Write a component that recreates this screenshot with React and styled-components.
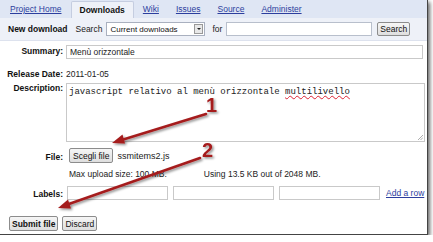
import React from 'react';
import styled, { createGlobalStyle } from 'styled-components';

const GlobalStyle = createGlobalStyle`
  html, body {
    margin: 0;
    padding: 0;
    background: #ffffff;
  }
  body {
    font-family: "Liberation Sans", Arial, sans-serif;
    font-size: 8.5px;
    color: #111;
  }
`;

const tabs = ['Project Home', 'Downloads', 'Wiki', 'Issues', 'Source', 'Administer'];

export default function App() {
  return (
    <>
      <GlobalStyle />
      <Frame>
        <TabBar>
          {tabs.map(t => (
            <Tab key={t} $active={t === 'Downloads'}>
              {t}
            </Tab>
          ))}
        </TabBar>
        <SearchBar>
          <BarTitle>New download</BarTitle>
          <BarText>Search</BarText>
          <Select>
            <span>Current downloads</span>
            <SelectArrow />
          </Select>
          <BarText>for</BarText>
          <BarInput />
          <Button>Search</Button>
        </SearchBar>

        <Form>
          <Label $top={5}>Summary:</Label>
          <Input $top={4} $width={352}>Menù orizzontale</Input>

          <Label $top={10}>Release Date:</Label>
          <Value $top={10}>2011-01-05</Value>

          <Label $top={4}>Description:</Label>
          <TextArea $top={4}>
            javascript relativo al menù orizzontale <Misspelled>multilivello</Misspelled>
            <Grip viewBox="0 0 6 6">
              <path d="M1 6 L6 1 M3.5 6 L6 3.5" stroke="#999" strokeWidth="0.8" />
            </Grip>
          </TextArea>

          <Label $top={10}>File:</Label>
          <FileRow $top={6}>
            <Button $pad={3} $height={13}>Scegli file</Button>
            <FileName>ssmitems2.js</FileName>
          </FileRow>

          <span />
          <UploadInfo $top={6}>
            <span>Max upload size: 100 MB.</span>
            <span>Using 13.5 KB out of 2048 MB.</span>
          </UploadInfo>

          <Label $top={10}>Labels:</Label>
          <LabelRow $top={7}>
            <Input $width={96} />
            <Input $width={96} />
            <Input $width={96} />
            <Link>Add a row</Link>
          </LabelRow>
        </Form>

        <Actions>
          <Button $bold $height={13}>Submit file</Button>
          <Button $height={13}>Discard</Button>
        </Actions>

        <Overlay viewBox="0 0 427 234">
          <defs>
            <filter id="sh" x="-20%" y="-20%" width="140%" height="140%">
              <feDropShadow dx="1.5" dy="1.5" stdDeviation="1" floodColor="#000" floodOpacity="0.45" />
            </filter>
          </defs>
          <g filter="url(#sh)" fill="#a51c1e" stroke="#a51c1e">
            <line x1="206" y1="114" x2="120" y2="140.5" strokeWidth="2.6" strokeLinecap="round" />
            <polygon points="112,143 122.5,134.5 125,143.5" stroke="none" />
            <line x1="200" y1="158" x2="66" y2="205" strokeWidth="2.6" strokeLinecap="round" />
            <polygon points="58,208 68,199.5 71,208.5" stroke="none" />
            <Digit x="206" y="112">1</Digit>
            <Digit x="202" y="157">2</Digit>
          </g>
        </Overlay>
      </Frame>
    </>
  );
}

const Frame = styled.div`
  position: relative;
  width: 427px;
  height: 234px;
  background: #fff;
  border-right: 1px solid #444;
  border-bottom: 1px solid #444;
  box-shadow: 2px 2px 4px rgba(0, 0, 0, 0.6);
`;

const TabBar = styled.div`
  display: flex;
  align-items: flex-end;
  height: 18px;
  padding-left: 2px;
  gap: 1px;
  background: #dfe6f4;
`;

const Tab = styled.div`
  display: flex;
  align-items: center;
  height: ${p => (p.$active ? '16px' : '18px')};
  padding: 0 8px;
  font-size: 8.5px;
  color: ${p => (p.$active ? '#111' : '#2c3e9e')};
  font-weight: ${p => (p.$active ? 700 : 400)};
  text-decoration: ${p => (p.$active ? 'none' : 'underline')};
  background: ${p => (p.$active ? '#eef1f8' : 'transparent')};
  border: ${p => (p.$active ? '1px solid #c5cde0' : 'none')};
  border-bottom: none;
  border-radius: 2px 2px 0 0;
`;

const SearchBar = styled.div`
  display: flex;
  align-items: center;
  height: 22px;
  padding-left: 8px;
  background: #eef1f8;
  border-bottom: 1px solid #dde2ee;
`;

const BarTitle = styled.span`
  font-weight: 700;
  margin-right: 8px;
`;

const BarText = styled.span`
  margin-right: 4px;
  color: #222;
`;

const Select = styled.div`
  display: flex;
  align-items: center;
  justify-content: space-between;
  width: 94px;
  height: 12px;
  margin-right: 7px;
  padding-left: 3px;
  background: #fff;
  border: 1px solid #a9b0bf;
  font-size: 8px;
  box-sizing: content-box;
`;

const SelectArrow = styled.span`
  width: 7px;
  height: 8px;
  margin-right: 1px;
  border: 1px solid #999;
  background: #e8e8e8;
  position: relative;
  &::after {
    content: '';
    position: absolute;
    left: 1.5px;
    top: 3px;
    border-left: 2px solid transparent;
    border-right: 2px solid transparent;
    border-top: 2.5px solid #222;
  }
`;

const BarInput = styled.div`
  width: 144px;
  height: 12px;
  margin-right: 5px;
  background: #fff;
  border: 1px solid #b8bfcc;
`;

const Button = styled.div`
  display: inline-flex;
  align-items: center;
  height: ${p => p.$height || 12}px;
  padding: 0 ${p => p.$pad || 2}px;
  font-size: 8.5px;
  font-weight: ${p => (p.$bold ? 700 : 400)};
  color: #111;
  background: linear-gradient(#f6f6f6, #dedede);
  border: 1px solid #8c8c8c;
  border-radius: 2px;
  white-space: nowrap;
`;

const Form = styled.div`
  display: grid;
  grid-template-columns: 63px 1fr;
  column-gap: 3px;
  align-items: start;
`;

const Label = styled.div`
  margin-top: ${p => p.$top}px;
  text-align: right;
  font-weight: 700;
  white-space: nowrap;
  line-height: 10px;
`;

const Input = styled.div`
  margin-top: ${p => p.$top || 0}px;
  width: ${p => p.$width}px;
  height: 12px;
  padding-left: 3px;
  line-height: 12px;
  font-size: 8.5px;
  color: #222;
  background: #fff;
  border: 1px solid #c9c9c9;
  box-sizing: content-box;
  flex-shrink: 0;
`;

const Value = styled.div`
  margin-top: ${p => p.$top}px;
  line-height: 10px;
  color: #222;
`;

const TextArea = styled.div`
  position: relative;
  margin-top: ${p => p.$top}px;
  width: 353px;
  height: 51px;
  padding: 3px 2px;
  font-family: "Liberation Mono", "Courier New", monospace;
  font-size: 9px;
  line-height: 10px;
  color: #222;
  background: #fff;
  border: 1px solid #c9c9c9;
`;

const Misspelled = styled.span`
  text-decoration: underline wavy #d23;
  text-decoration-thickness: 0.5px;
  text-underline-offset: 1px;
`;

const Grip = styled.svg`
  position: absolute;
  right: 1px;
  bottom: 1px;
  width: 6px;
  height: 6px;
`;

const FileRow = styled.div`
  display: flex;
  align-items: center;
  gap: 4px;
  margin-top: ${p => p.$top}px;
  padding-left: 3px;
`;

const FileName = styled.span`
  font-size: 9px;
  color: #222;
`;

const UploadInfo = styled.div`
  display: flex;
  gap: 37px;
  margin-top: ${p => p.$top}px;
  padding-left: 3px;
  line-height: 10px;
  color: #222;
`;

const LabelRow = styled.div`
  display: flex;
  align-items: center;
  gap: 5px;
  margin-top: ${p => p.$top}px;
  margin-left: 1px;
`;

const Link = styled.span`
  margin-left: 1px;
  color: #2c3e9e;
  text-decoration: underline;
  white-space: nowrap;
`;

const Actions = styled.div`
  display: flex;
  gap: 4px;
  margin-top: 16px;
  padding-left: 9px;
`;

const Overlay = styled.svg`
  position: absolute;
  left: 0;
  top: 0;
  width: 427px;
  height: 234px;
  pointer-events: none;
`;

const Digit = styled.text`
  font-family: "Liberation Sans", Arial, sans-serif;
  font-weight: 700;
  font-size: 20px;
  stroke: none;
`;
